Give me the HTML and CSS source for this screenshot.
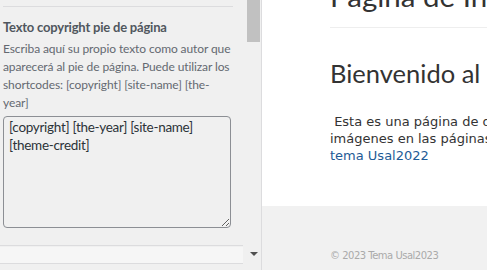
FILE: index.html
```html
<!doctype html>
<html lang="es">
<head>
	<meta charset="UTF-8">
	<title>Personalizar</title>
	<link rel="stylesheet" href="styles.css">
</head>
<body>
	<aside class="panel">
		<div class="panel-body">
			<div class="control">
				<span class="control-title">Texto copyright pie de página</span>
				<p class="description">Escriba aquí su propio texto como autor que aparecerá al pie de página. Puede utilizar los shortcodes: [copyright] [site-name] [the-year]</p>
				<textarea class="field">[copyright] [the-year] [site-name] [theme-credit]</textarea>
			</div>
			<div class="next-control"></div>
		</div>
		<div class="scrollbar">
			<div class="thumb"></div>
			<div class="track"></div>
			<div class="arrow"></div>
		</div>
	</aside>
	<main class="preview">
		<div class="content">
			<h1 class="page-title">Página de Inicio</h1>
			<h2 class="welcome">Bienvenido al sitio de demostración</h2>
			<p class="intro">&nbsp;Esta es una página de demostración para ver cómo quedan los textos y las<br>imágenes en las páginas creadas con el<br><a href="#">tema Usal2022</a></p>
		</div>
		<footer class="site-footer">© 2023 Tema Usal2023</footer>
	</main>
</body>
</html>
```
FILE: styles.css
```css
* {
	box-sizing: border-box;
}
html, body {
	margin: 0;
	height: 100%;
	overflow: hidden;
}
body {
	display: flex;
	background-color: #fff;
}
.panel {
	width: 262px;
	flex: none;
	display: flex;
	background-color: #f0f0f0;
	border-right: 1px solid #dcdcde;
	font-family: Lato, sans-serif;
}
.panel-body {
	width: 246px;
	padding: 6px 0 0 3px;
}
.control {
	width: 230px;
	border-top: 1px solid #dcdcde;
	padding-top: 10px;
	padding-bottom: 17px;
}
.control-title {
	display: block;
	font-size: 13px;
	font-weight: 700;
	letter-spacing: -0.2px;
	line-height: 20px;
	color: #50575e;
}
.description {
	margin: 3px -1px 4px 0;
	font-size: 12px;
	letter-spacing: -0.1px;
	line-height: 18px;
	color: #646970;
}
.field {
	display: block;
	width: 228px;
	height: 112px;
	margin: 0;
	padding: 1px 5px;
	font-family: Lato, sans-serif;
	font-size: 13.5px;
	letter-spacing: -0.3px;
	line-height: 18px;
	color: #2c3338;
	background-color: #f0f0f0;
	border: 1px solid #8c8f94;
	border-radius: 4px;
	resize: vertical;
}
.next-control {
	margin-left: -3px;
	width: 243px;
	height: 19px;
	border-top: 1px solid #dcdcde;
	border-bottom: 1px solid #dcdcde;
	background: linear-gradient(#f0f0f0 1px, #f6f6f6 1px);
}
.scrollbar {
	width: 15px;
	display: flex;
	flex-direction: column;
	align-items: center;
	padding-bottom: 8px;
}
.thumb {
	width: 13px;
	height: 42px;
	background-color: #c1c1c1;
}
.track {
	flex: 1;
}
.arrow {
	width: 0;
	height: 0;
	margin-bottom: 6px;
	border-left: 4px solid transparent;
	border-right: 4px solid transparent;
	border-top: 4px solid #505050;
}
.preview {
	flex: 1;
	display: flex;
	flex-direction: column;
	overflow: hidden;
	white-space: nowrap;
}
.content {
	flex: 1;
	padding-left: 68px;
	margin-top: -23px;
}
.page-title {
	margin: 0;
	padding-bottom: 12px;
	border-bottom: 1px solid #eee;
	font-family: Lato, sans-serif;
	font-size: 29.5px;
	font-weight: 400;
	line-height: 38px;
	color: #333;
}
.welcome {
	margin: 29px 0 0;
	font-family: Lato, sans-serif;
	font-size: 25.5px;
	font-weight: 400;
	line-height: 32px;
	color: #333;
}
.intro {
	margin: 24px 0 0;
	font-family: "DejaVu Sans", Verdana, sans-serif;
	font-size: 13px;
	line-height: 17px;
	color: #333;
}
.intro a {
	color: #1e5b96;
	text-decoration: none;
}
.site-footer {
	height: 64px;
	padding: 44px 0 0 68px;
	background-color: #f1f1f1;
	font-family: "DejaVu Sans", Verdana, sans-serif;
	font-size: 10px;
	letter-spacing: -0.5px;
	color: #aaa;
}
```
